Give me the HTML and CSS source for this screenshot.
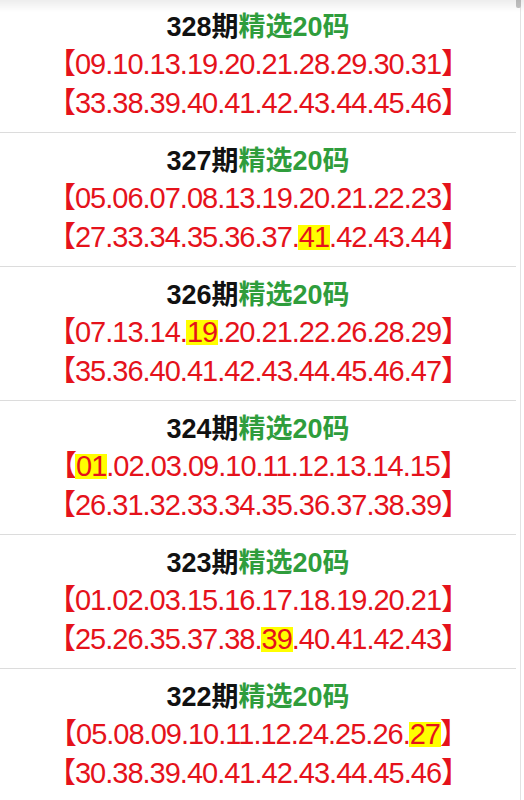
FILE: index.html
```html
<!DOCTYPE html>
<html lang="zh-CN">
<head>
    <meta charset="UTF-8">
    <meta name="viewport" content="width=device-width, initial-scale=1.0">
    <title>精选20码</title>
    <link rel="stylesheet" href="styles.css">
</head>
<body>
    <div class="page">
        <div class="list">
            <div class="item first">
                <div class="title">328期<span class="green">精选20码</span></div>
                <div class="nums">【09.10.13.19.20.21.28.29.30.31】</div>
                <div class="nums">【33.38.39.40.41.42.43.44.45.46】</div>
            </div>
            <div class="item">
                <div class="title">327期<span class="green">精选20码</span></div>
                <div class="nums">【05.06.07.08.13.19.20.21.22.23】</div>
                <div class="nums">【27.33.34.35.36.37.<span class="hit">41</span>.42.43.44】</div>
            </div>
            <div class="item">
                <div class="title">326期<span class="green">精选20码</span></div>
                <div class="nums">【07.13.14.<span class="hit">19</span>.20.21.22.26.28.29】</div>
                <div class="nums">【35.36.40.41.42.43.44.45.46.47】</div>
            </div>
            <div class="item">
                <div class="title">324期<span class="green">精选20码</span></div>
                <div class="nums">【<span class="hit">01</span>.02.03.09.10.11.12.13.14.15】</div>
                <div class="nums">【26.31.32.33.34.35.36.37.38.39】</div>
            </div>
            <div class="item">
                <div class="title">323期<span class="green">精选20码</span></div>
                <div class="nums">【01.02.03.15.16.17.18.19.20.21】</div>
                <div class="nums">【25.26.35.37.38.<span class="hit">39</span>.40.41.42.43】</div>
            </div>
            <div class="item">
                <div class="title">322期<span class="green">精选20码</span></div>
                <div class="nums">【05.08.09.10.11.12.24.25.26.<span class="hit">27</span>】</div>
                <div class="nums">【30.38.39.40.41.42.43.44.45.46】</div>
            </div>
        </div>
        <div class="track">
            <div class="thumb"></div>
        </div>
    </div>
    <div class="shade"></div>
</body>
</html>
```

FILE: styles.css
```css
body {
    margin: 0;
    padding: 0;
    background: #ffffff;
    font-family: "Liberation Sans", "Noto Sans CJK SC", sans-serif;
    overflow: hidden;
}
.page {
    display: flex;
    height: 800px;
    overflow: hidden;
}
.list {
    width: 516px;
    flex: none;
}
.item {
    padding: 10px 0 9px;
    border-bottom: 1px solid #dcdcdc;
    text-align: center;
}
.item.first {
    margin-top: -1px;
}
.title {
    font-size: 27px;
    font-weight: bold;
    line-height: 36px;
    color: #111111;
}
.green {
    color: #2f9d3c;
}
.nums {
    font-size: 29px;
    line-height: 39px;
    letter-spacing: -1px;
    color: #e5121b;
    white-space: nowrap;
}
.hit {
    display: inline-block;
    padding: 0 1px;
    margin: 0 -1px;
    line-height: 25px;
    background: #ffff00;
}
.track {
    width: 8px;
    flex: none;
    background: linear-gradient(to right, transparent 4px, #e2e2e2 4px, #e2e2e2 5px, transparent 5px);
}
.thumb {
    width: 5px;
    height: 8px;
    background: #c4c4c4;
    border-radius: 0 0 2px 2px;
}
.shade {
    position: fixed;
    top: 0;
    left: 0;
    right: 0;
    height: 12px;
    background: linear-gradient(to bottom, rgba(0, 0, 0, 0.07), rgba(0, 0, 0, 0));
}
```
